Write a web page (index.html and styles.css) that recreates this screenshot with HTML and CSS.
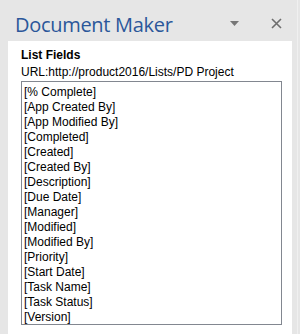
FILE: index.html
```html
<!DOCTYPE html>
<html lang="en">
<head>
    <meta charset="UTF-8">
    <title>Document Maker</title>
    <link rel="stylesheet" href="styles.css">
</head>
<body>
    <div class="pane">
        <div class="pane-header">
            <span class="pane-title">Document Maker</span>
            <span class="pane-menu" title="Task Pane Options">
                <svg width="9" height="5" viewBox="0 0 9 5"><path d="M0 0H9L4.5 5Z" fill="#777"/></svg>
            </span>
            <span class="pane-close" title="Close">
                <svg width="11" height="11" viewBox="0 0 11 11"><path d="M1 1L10 10M10 1L1 10" stroke="#6e6e6e" stroke-width="1.6"/></svg>
            </span>
        </div>
        <div class="pane-body">
            <div class="section-title">List Fields</div>
            <div class="list-url">URL:http://product2016/Lists/PD Project</div>
            <ul class="field-list">
                <li>[% Complete]</li>
                <li>[App Created By]</li>
                <li>[App Modified By]</li>
                <li>[Completed]</li>
                <li>[Created]</li>
                <li>[Created By]</li>
                <li>[Description]</li>
                <li>[Due Date]</li>
                <li>[Manager]</li>
                <li>[Modified]</li>
                <li>[Modified By]</li>
                <li>[Priority]</li>
                <li>[Start Date]</li>
                <li>[Task Name]</li>
                <li>[Task Status]</li>
                <li>[Version]</li>
            </ul>
        </div>
    </div>
</body>
</html>
```

FILE: styles.css
```css
html, body {
    margin: 0;
    padding: 0;
}
body {
    background-color: #e6e6e6;
    font-family: 'Liberation Sans', Arial, sans-serif;
    height: 334px;
    overflow: hidden;
}
.pane {
    width: 297px;
    height: 334px;
    border-right: 1px solid #f0f0f0;
    display: flex;
    flex-direction: column;
}
.pane-header {
    height: 41px;
    display: flex;
    align-items: flex-start;
    padding-left: 15px;
}
.pane-title {
    font-family: 'Open Sans', sans-serif;
    font-size: 20px;
    letter-spacing: -0.3px;
    color: #2b579a;
    line-height: 20px;
    margin-top: 15px;
}
.pane-menu {
    margin-left: auto;
    margin-top: 21px;
    display: flex;
}
.pane-close {
    margin-left: 32px;
    margin-right: 15px;
    margin-top: 18px;
    display: flex;
}
.pane-body {
    flex: 1;
    background-color: #ffffff;
    margin: 0 5px 0 8px;
    padding: 7px 10px 0 13px;
}
.section-title {
    font-size: 12px;
    font-weight: bold;
    color: #000;
    line-height: 14px;
}
.list-url {
    font-size: 12px;
    color: #000;
    line-height: 14px;
    margin-top: 3px;
    white-space: nowrap;
}
.field-list {
    list-style: none;
    margin: 2px 0 0 0;
    padding: 3px 2px 0 2px;
    height: 244px;
    box-sizing: border-box;
    border: 1px solid #828790;
    overflow: hidden;
}
.field-list li {
    font-size: 12px;
    line-height: 15px;
    color: #000;
    white-space: nowrap;
}
```
